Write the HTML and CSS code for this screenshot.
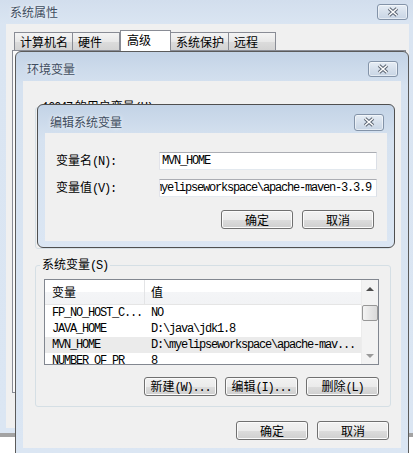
FILE: index.html
```html
<!DOCTYPE html>
<html lang="zh-CN">

<head>
    <meta charset="UTF-8">
    <meta name="viewport" content="width=device-width, initial-scale=1.0">
    <title>环境变量</title>
    <link rel="stylesheet" href="styles.css">
</head>

<body>
    <!-- 系统属性 -->
    <div class="win outer">
        <div class="title">
            <span class="caption">系统属性</span>
            <a class="close" href="javascript:;">
                <svg width="14" height="10" viewBox="0 0 14 10"><path class="xo" d="M3 1.5L11 8.5M11 1.5L3 8.5"/><path class="xi" d="M3 1.5L11 8.5M11 1.5L3 8.5"/></svg>
            </a>
        </div>
        <div class="client">
            <ul class="tabs">
                <li class="tab">计算机名</li>
                <li class="tab">硬件</li>
                <li class="tab active">高级</li>
                <li class="tab">系统保护</li>
                <li class="tab">远程</li>
            </ul>
            <div class="panel"></div>
        </div>
    </div>

    <!-- 环境变量 -->
    <div class="win env">
        <div class="title">
            <span class="caption">环境变量</span>
            <a class="close" href="javascript:;">
                <svg width="14" height="10" viewBox="0 0 14 10"><path class="xo" d="M3 1.5L11 8.5M11 1.5L3 8.5"/><path class="xi" d="M3 1.5L11 8.5M11 1.5L3 8.5"/></svg>
            </a>
        </div>
        <div class="client">
            <fieldset class="group user">
                <legend><span class="m">16647</span> 的用户变量<span class="m">(U)</span></legend>
                <div class="list">
                    <div class="grid">
                        <div class="row head"><span>变量</span><span>值</span></div>
                        <div class="row"><span class="m">Path</span><span class="m">D:\java\jdk1.8\bin</span></div>
                        <div class="row"><span class="m">TEMP</span><span class="m">%USERPROFILE%\AppData\Local\Temp</span></div>
                        <div class="row"><span class="m">TMP</span><span class="m">%USERPROFILE%\AppData\Local\Temp</span></div>
                    </div>
                </div>
                <div class="btns">
                    <button class="btn">新建<span class="m">(N)...</span></button>
                    <button class="btn">编辑<span class="m">(E)...</span></button>
                    <button class="btn">删除<span class="m">(D)</span></button>
                </div>
            </fieldset>

            <fieldset class="group">
                <legend>系统变量<span class="m">(S)</span></legend>
                <div class="list">
                    <div class="grid">
                        <div class="row head"><span>变量</span><span>值</span></div>
                        <div class="row"><span class="m">FP_NO_HOST_C...</span><span class="m">NO</span></div>
                        <div class="row"><span class="m">JAVA_HOME</span><span class="m">D:\java\jdk1.8</span></div>
                        <div class="row sel"><span class="m">MVN_HOME</span><span class="m">D:\myelipseworkspace\apache-mav...</span></div>
                        <div class="row"><span class="m">NUMBER_OF_PR</span><span class="m">8</span></div>
                    </div>
                    <div class="scroll">
                        <div class="arrow up"></div>
                        <div class="track"><div class="thumb"></div></div>
                        <div class="arrow down"></div>
                    </div>
                </div>
                <div class="btns">
                    <button class="btn">新建<span class="m">(W)...</span></button>
                    <button class="btn">编辑<span class="m">(I)...</span></button>
                    <button class="btn">删除<span class="m">(L)</span></button>
                </div>
            </fieldset>

            <div class="btns foot">
                <button class="btn">确定</button>
                <button class="btn">取消</button>
            </div>
        </div>
    </div>

    <!-- 编辑系统变量 -->
    <div class="win edit">
        <div class="title">
            <span class="caption">编辑系统变量</span>
            <a class="close" href="javascript:;">
                <svg width="14" height="10" viewBox="0 0 14 10"><path class="xo" d="M3 1.5L11 8.5M11 1.5L3 8.5"/><path class="xi" d="M3 1.5L11 8.5M11 1.5L3 8.5"/></svg>
            </a>
        </div>
        <div class="client">
            <div class="form">
                <label>变量名<span class="m">(N):</span></label>
                <div class="input"><span class="m">MVN_HOME</span></div>
                <label>变量值<span class="m">(V):</span></label>
                <div class="input end"><span class="m">D:\myelipseworkspace\apache-maven-3.3.9</span></div>
            </div>
            <div class="btns">
                <button class="btn">确定</button>
                <button class="btn">取消</button>
            </div>
        </div>
    </div>
</body>

</html>
```

FILE: styles.css
```css
* {
    margin: 0;
    padding: 0;
    box-sizing: border-box;
}

ul {
    list-style: none;
}

body {
    position: relative;
    width: 413px;
    height: 453px;
    overflow: hidden;
    background: #fff;
    font-family: "Noto Sans CJK SC", sans-serif;
    font-size: 12px;
    line-height: 16px;
    color: #000;
}

/* ascii parts, narrow like SimSun */
.m {
    font-family: "Liberation Mono", "Noto Sans CJK SC", monospace;
    letter-spacing: -1.2px;
}

/* windows */
.win {
    position: absolute;
    display: flex;
    flex-direction: column;
    border: 1px solid #5b5b5b;
    border-radius: 6px 6px 0 0;
    background: linear-gradient(#c3d3e6, #d6e2f0 34px, #dbe6f3);
}

.outer {
    left: -1px;
    top: -1px;
    width: 417px;
    height: 438px;
    padding: 0 6px 5px;
    border-color: #7a7a7a;
    border-bottom: 4px solid #a3a3a3;
    border-radius: 0;
    background: linear-gradient(#d2deed, #dae5f2 24px, #dbe6f3);
}

.env {
    left: 15px;
    top: 51px;
    width: 394px;
    height: 405px;
    padding: 0 7px 7px;
}

.edit {
    left: 37px;
    top: 104px;
    width: 358px;
    height: 144px;
    padding: 0 7px 6px;
    border-color: #4f4f4f;
    border-radius: 6px;
}

.title {
    display: flex;
    align-items: center;
    flex-shrink: 0;
}

.outer .title {
    height: 24px;
    padding-left: 4px;
}

.env .title {
    height: 29px;
    padding: 5px 0 0 4px;
}

.edit .title {
    height: 28px;
    padding: 6px 0 0 5px;
}

.caption {
    color: #3f4d5f;
    text-shadow: 0 0 4px rgba(255, 255, 255, 0.9);
}

.close {
    margin-left: auto;
    margin-right: 3px;
    width: 30px;
    height: 16px;
    display: flex;
    align-items: center;
    justify-content: center;
    border: 1px solid #8393a8;
    border-radius: 3px;
    background: linear-gradient(#e6edf5, #d6e0ec 50%, #c8d5e5);
    box-shadow: inset 0 0 0 1px rgba(255, 255, 255, 0.5);
}

.outer .close {
    width: 31px;
    margin-right: 1px;
}

.edit .close {
    height: 17px;
}

.xo {
    stroke: #5a6472;
    stroke-width: 3.6;
    fill: none;
}

.xi {
    stroke: #fff;
    stroke-width: 1.6;
    fill: none;
}

.client {
    flex: 1;
    background: #f0f0f0;
    overflow: hidden;
}

/* tabs of 系统属性 */
.outer .client {
    padding-top: 6px;
}

.tabs {
    display: flex;
    align-items: flex-end;
    height: 20px;
    margin-left: 8px;
    position: relative;
    z-index: 1;
}

.tab {
    min-width: 47px;
    height: 18px;
    padding: 0 4px 0 5px;
    line-height: 17px;
    border: 1px solid #898c95;
    border-bottom: none;
    background: linear-gradient(#f4f4f4, #e8e8e8 50%, #dcdcdc 50%, #d3d3d3);
}

.tab + .tab {
    border-left: none;
}

.tab.active {
    min-width: 51px;
    height: 21px;
    margin-bottom: -1px;
    padding-left: 6px;
    line-height: 18px;
    border-left: 1px solid #898c95;
    background: #fff;
}

.tab.active + .tab {
    border-left: none;
}

.panel {
    height: 343px;
    margin: 0 3px 0 6px;
    border: 1px solid #898c95;
    background: #fafafa;
}

/* 环境变量 */
.env .client {
    padding: 17px 10px 0 12px;
}

.group {
    min-width: 0;
    padding: 5px 11px 10px 8px;
    border: 1px solid #d5dfe5;
    border-radius: 3px;
}

.group + .group {
    margin-top: 7px;
}

.group legend {
    margin-left: -4px;
    padding: 0 2px;
    line-height: 16px;
}

.list {
    display: flex;
    height: 86px;
    border: 1px solid #828790;
    background: #fff;
    overflow: hidden;
}

.grid {
    flex: 1;
}

.row {
    display: grid;
    grid-template-columns: 100px 1fr;
    height: 16px;
    line-height: 16px;
    white-space: nowrap;
}

.row span {
    overflow: hidden;
}

.row span:first-child {
    padding-left: 7px;
}

.row span:last-child {
    padding-left: 6px;
}

.row.head {
    height: 25px;
    line-height: 24px;
    border-bottom: 1px solid #e5e5e5;
    background: linear-gradient(#fff, #fff 50%, #f4f5f7 50%, #f2f3f5);
}

.row.head span:first-child {
    border-right: 1px solid #e3e4e6;
}

.row.sel {
    background: #ebebeb;
}

.scroll {
    width: 17px;
    display: flex;
    flex-direction: column;
    background: #f3f3f3;
    border-left: 1px solid #ececec;
}

.arrow {
    height: 17px;
    display: flex;
    align-items: center;
    justify-content: center;
}

.arrow::after {
    content: "";
    border-left: 4px solid transparent;
    border-right: 4px solid transparent;
}

.arrow.up::after {
    border-bottom: 4px solid #4d4d4d;
}

.arrow.down::after {
    border-top: 4px solid #9a9a9a;
}

.track {
    flex: 1;
    padding-top: 8px;
}

.thumb {
    height: 16px;
    border: 1px solid #979797;
    border-radius: 2px;
    background: linear-gradient(90deg, #f4f4f4, #e6e6e6 50%, #dadada);
}

.btns {
    display: flex;
    justify-content: flex-end;
    gap: 8px;
    margin-top: 12px;
}

.btn {
    width: 73px;
    height: 19px;
    font: inherit;
    color: #000;
    border: 1px solid #707070;
    border-radius: 3px;
    background: linear-gradient(#f2f2f2, #ebebeb 50%, #dddddd 50%, #cfcfcf);
    box-shadow: inset 0 0 0 1px #fbfbfb;
}

.foot {
    gap: 9px;
    margin-top: 14px;
    margin-right: 2px;
}

.foot .btn {
    width: 72px;
}

/* 编辑系统变量 */
.edit .client {
    padding: 19px 10px 0 11px;
}

.form {
    display: grid;
    grid-template-columns: 103px 218px;
    grid-auto-rows: 18px;
    row-gap: 9px;
    align-items: center;
}

.input {
    height: 18px;
    display: flex;
    align-items: center;
    padding: 0 5px 0 2px;
    overflow: hidden;
    white-space: nowrap;
    background: #fff;
    border: 1px solid #e3e9ef;
    border-top-color: #abadb3;
    border-left-color: #e2e3ea;
    border-right-color: #dbdfe6;
}

.input.end {
    justify-content: flex-end;
}

.edit .btns {
    gap: 9px;
    margin-top: 13px;
    margin-right: 3px;
}

.edit .btn {
    width: 72px;
}
```
